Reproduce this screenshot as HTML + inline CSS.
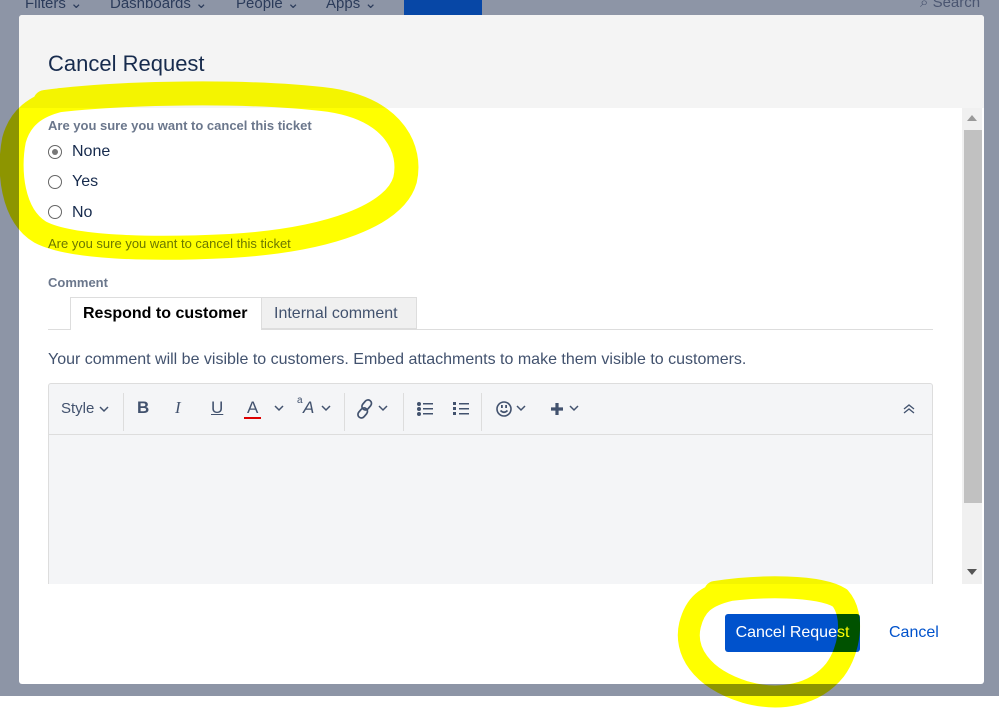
<!DOCTYPE html>
<html><head><meta charset="utf-8"><style>
*{box-sizing:border-box;margin:0;padding:0}
body{width:999px;height:712px;overflow:hidden;background:#fff;font-family:"Liberation Sans",sans-serif;position:relative}
.ov{position:absolute;left:0;top:0;width:999px;height:696px;background:#8d95a6}
.nav{position:absolute;top:-6px;font-size:15px;color:#2b3b5a}
.modal{position:absolute;left:19px;top:15px;width:965px;height:669px;background:#fff;border-radius:3px;overflow:hidden}
.hdr{height:93px;background:#f4f4f4;position:relative}
.hdr h1{position:absolute;left:29px;top:36px;font-weight:normal;font-size:22px;color:#172b4d}
.t{position:absolute;color:#172b4d}
.lbl{font-size:13px;color:#6b778c;font-weight:bold}
.radio{position:absolute;width:14px;height:14px;border:1px solid #666;border-radius:50%;background:#fff}
.radio.on::after{content:"";position:absolute;left:3px;top:3px;width:6px;height:6px;border-radius:50%;background:#777}
.sb{position:absolute;left:943px;top:93px;width:20px;height:476px;background:#f0f0f0}
.th{position:absolute;left:945px;top:115px;width:18px;height:373px;background:#c1c1c1}
.tb{position:absolute;font-size:17px;color:#42526e}
.body{position:absolute;left:0;top:93px;width:943px;height:476px;overflow:hidden}
svg.i{position:absolute}
</style></head><body>
<div class="ov"></div>
<div class="nav" style="left:25px">Filters ⌄</div>
<div class="nav" style="left:110px">Dashboards ⌄</div>
<div class="nav" style="left:236px">People ⌄</div>
<div class="nav" style="left:326px">Apps ⌄</div>
<div style="position:absolute;left:404px;top:0;width:78px;height:15px;background:#0747a6"></div>
<div class="nav" style="left:920px;color:#4a5570">⌕ Search</div>
<div class="modal">
 <div class="hdr"><h1>Cancel Request</h1></div>
 <div class="body">
 <div style="position:absolute;left:0;top:-93px;width:943px;height:669px">
 <div class="t lbl" style="left:29px;top:103px">Are you sure you want to cancel this ticket</div>
 <div class="radio on" style="left:29px;top:130px"></div><div class="t" style="left:53px;top:128px;font-size:16px">None</div>
 <div class="radio" style="left:29px;top:160px"></div><div class="t" style="left:53px;top:158px;font-size:16px">Yes</div>
 <div class="radio" style="left:29px;top:190px"></div><div class="t" style="left:53px;top:189px;font-size:16px">No</div>
 <div class="t" style="left:29px;top:221px;font-size:13px;color:#6b778c">Are you sure you want to cancel this ticket</div>
 <div class="t lbl" style="left:29px;top:260px">Comment</div>
 <div style="position:absolute;left:29px;top:314px;width:885px;height:1px;background:#ddd"></div>
 <div style="position:absolute;left:51px;top:282px;width:192px;height:33px;background:#fff;border:1px solid #ddd;border-bottom:none"></div>
 <div class="t" style="left:64px;top:290px;font-size:16px;font-weight:bold;color:#000">Respond to customer</div>
 <div style="position:absolute;left:242px;top:282px;width:156px;height:32px;background:#f0f0f0;border:1px solid #ddd"></div>
 <div class="t" style="left:255px;top:290px;font-size:16px;color:#42526e">Internal comment</div>
 <div class="t" style="left:29px;top:336px;font-size:16px;color:#42526e">Your comment will be visible to customers. Embed attachments to make them visible to customers.</div>
 <div style="position:absolute;left:29px;top:368px;width:885px;height:260px;background:#f4f5f7;border:1px solid #ddd;border-radius:3px"></div>
 <div style="position:absolute;left:30px;top:419px;width:883px;height:1px;background:#ddd"></div>
 <div class="tb" style="left:42px;top:385px;font-size:15px">Style</div>
 <svg class="i" style="left:80px;top:390px" width="10" height="8"><path d="M1 2l4 4 4-4" stroke="#42526e" stroke-width="1.5" fill="none"/></svg>
 <div style="position:absolute;left:104px;top:378px;width:1px;height:38px;background:#ddd"></div>
 <div class="tb" style="left:118px;top:383px;font-weight:bold">B</div>
 <div class="tb" style="left:156px;top:383px;font-style:italic;font-family:'Liberation Serif'">I</div>
 <div class="tb" style="left:192px;top:383px;text-decoration:underline">U</div>
 <div class="tb" style="left:228px;top:383px">A</div><div style="position:absolute;left:225px;top:402px;width:17px;height:2px;background:#d00"></div>
 <svg class="i" style="left:255px;top:389px" width="10" height="8"><path d="M1 2l4 4 4-4" stroke="#42526e" stroke-width="1.5" fill="none"/></svg>
 <div class="tb" style="left:278px;top:380px;font-size:10px">a</div>
 <div class="tb" style="left:284px;top:383px;font-style:italic">A</div>
 <svg class="i" style="left:302px;top:389px" width="10" height="8"><path d="M1 2l4 4 4-4" stroke="#42526e" stroke-width="1.5" fill="none"/></svg>
 <div style="position:absolute;left:325px;top:378px;width:1px;height:38px;background:#ddd"></div>
 <svg class="i" style="left:336px;top:383px" width="22" height="22"><g stroke="#42526e" stroke-width="1.7" fill="none"><rect x="8" y="1" width="7" height="11" rx="3.5" transform="rotate(40 11 7)"/><rect x="4" y="9" width="7" height="11" rx="3.5" transform="rotate(40 7 15)"/></g></svg>
 <svg class="i" style="left:359px;top:389px" width="10" height="8"><path d="M1 2l4 4 4-4" stroke="#42526e" stroke-width="1.5" fill="none"/></svg>
 <div style="position:absolute;left:384px;top:378px;width:1px;height:38px;background:#ddd"></div>
 <svg class="i" style="left:397px;top:386px" width="18" height="16"><g fill="#42526e"><circle cx="3" cy="3" r="2"/><circle cx="3" cy="8" r="2"/><circle cx="3" cy="13" r="2"/><rect x="7" y="2" width="10" height="1.5"/><rect x="7" y="7" width="10" height="1.5"/><rect x="7" y="12" width="10" height="1.5"/></g></svg>
 <svg class="i" style="left:433px;top:386px" width="18" height="16"><g fill="#42526e"><rect x="1" y="1" width="3" height="3"/><rect x="1" y="6" width="3" height="3"/><rect x="1" y="11" width="3" height="3"/><rect x="7" y="2" width="10" height="1.5"/><rect x="7" y="7" width="10" height="1.5"/><rect x="7" y="12" width="10" height="1.5"/></g></svg>
 <div style="position:absolute;left:462px;top:378px;width:1px;height:38px;background:#ddd"></div>
 <svg class="i" style="left:476px;top:385px" width="18" height="18"><g stroke="#42526e" stroke-width="1.6" fill="none"><circle cx="9" cy="9" r="7"/><path d="M5.5 10.5q3.5 3.5 7 0"/></g><rect x="6" y="5" width="1.8" height="3" fill="#42526e"/><rect x="10.2" y="5" width="1.8" height="3" fill="#42526e"/></svg>
 <svg class="i" style="left:497px;top:389px" width="10" height="8"><path d="M1 2l4 4 4-4" stroke="#42526e" stroke-width="1.5" fill="none"/></svg>
 <svg class="i" style="left:530px;top:386px" width="16" height="16"><path d="M8 2v12M2 8h12" stroke="#42526e" stroke-width="3.2"/></svg>
 <svg class="i" style="left:550px;top:389px" width="10" height="8"><path d="M1 2l4 4 4-4" stroke="#42526e" stroke-width="1.5" fill="none"/></svg>
 <svg class="i" style="left:884px;top:388px" width="12" height="12"><path d="M1 6l5-4 5 4M1 10l5-4 5 4" stroke="#42526e" stroke-width="1.3" fill="none"/></svg>
 </div></div>
 <div class="sb"></div><div class="th"></div>
 <div style="position:absolute;left:948px;top:100px;border:5px solid transparent;border-bottom:6px solid #999;border-top:none"></div>
 <div style="position:absolute;left:948px;top:554px;border:5px solid transparent;border-top:6px solid #555;border-bottom:none"></div>
 <div style="position:absolute;left:706px;top:599px;width:135px;height:38px;background:#0052cc;border-radius:3px;color:#fff;font-size:16px;line-height:38px;text-align:center">Cancel Request</div>
 <div class="t" style="left:870px;top:609px;font-size:16px;color:#0052cc">Cancel</div>
</div>
<svg width="999" height="712" style="position:absolute;left:0;top:0;mix-blend-mode:multiply">
 <path d="M45 102 C120 92 250 90 330 100 C395 110 412 150 405 180 C395 215 330 240 230 246 C150 250 70 248 40 232 C12 215 8 170 14 140 C20 118 35 106 60 100" fill="none" stroke="#ffff00" stroke-width="24" stroke-linecap="round"/>
 <path d="M715 592 C760 585 820 585 840 598 C855 615 850 650 835 670 C815 695 780 702 745 692 C700 678 684 650 690 625 C695 605 705 596 730 590" fill="none" stroke="#ffff00" stroke-width="22" stroke-linecap="round"/>
</svg>
</body></html>
